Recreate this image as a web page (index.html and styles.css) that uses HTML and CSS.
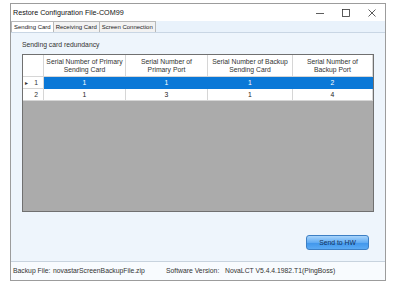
FILE: index.html
```html
<!DOCTYPE html>
<html>
<head>
    <title>Restore Configuration File-COM99</title>
    <link rel="stylesheet" href="styles.css">
</head>
<body>
    <div class="window">
        <div class="titlebar">
            <span class="title">Restore Configuration File-COM99</span>
            <div class="controls">
                <span class="ctl">
                    <svg width="8" height="8" viewBox="0 0 8 8"><line x1="0" y1="4.5" x2="8" y2="4.5" stroke="#333" stroke-width="0.8"/></svg>
                </span>
                <span class="ctl">
                    <svg width="8" height="8" viewBox="0 0 8 8"><rect x="0.5" y="0.5" width="7" height="7" fill="none" stroke="#333" stroke-width="0.8"/></svg>
                </span>
                <span class="ctl">
                    <svg width="8" height="8" viewBox="0 0 8 8"><path d="M0.5 0.5 L7.5 7.5 M7.5 0.5 L0.5 7.5" stroke="#333" stroke-width="0.8"/></svg>
                </span>
            </div>
        </div>

        <div class="tabs">
            <span class="tab active">Sending Card</span>
            <span class="tab">Receiving Card</span>
            <span class="tab">Screen Connection</span>
        </div>

        <div class="page">
            <div class="group-label">Sending card redundancy</div>

            <div class="grid">
                <div class="cell head corner"></div>
                <div class="cell head">Serial Number of Primary<br>Sending Card</div>
                <div class="cell head">Serial Number of<br>Primary Port</div>
                <div class="cell head">Serial Number of Backup<br>Sending Card</div>
                <div class="cell head">Serial Number of<br>Backup Port</div>

                <div class="cell rowhead"><span class="arrow">&#9656;</span>1</div>
                <div class="cell sel">1</div>
                <div class="cell sel">1</div>
                <div class="cell sel">1</div>
                <div class="cell sel">2</div>

                <div class="cell rowhead">2</div>
                <div class="cell">1</div>
                <div class="cell">3</div>
                <div class="cell">1</div>
                <div class="cell">4</div>

                <div class="empty"></div>
            </div>

            <div class="actions">
                <button class="send-button">Send to HW</button>
            </div>
        </div>

        <div class="status">
            <div class="status-line">
                <span class="lbl">Backup File:</span>
                <span class="val">novastarScreenBackupFile.zip</span>
                <span class="lbl2">Software Version:</span>
                <span>NovaLCT V5.4.4.1982.T1(PingBoss)</span>
            </div>
        </div>
    </div>
</body>
</html>
```

FILE: styles.css
```css
body {
    margin: 0;
    width: 394px;
    height: 285px;
    overflow: hidden;
    background: #fff;
    font-family: "Liberation Sans", Arial, sans-serif;
    font-size: 6.8px;
    color: #222;
}
.window {
    margin: 3px 0 0 10px;
    width: 374px;
    height: 276px;
    border: 1px solid #9c9c9c;
    display: flex;
    flex-direction: column;
    overflow: hidden;
    background: #fff;
}
.titlebar {
    height: 17px;
    display: flex;
    align-items: center;
    justify-content: space-between;
    padding-left: 2px;
}
.title { font-size: 7.2px; color: #111; }
.controls { display: flex; }
.ctl {
    width: 26px;
    height: 17px;
    display: flex;
    align-items: center;
    justify-content: center;
}
.tabs {
    height: 12px;
    background: #e9f2fb;
    display: flex;
    align-items: flex-end;
    border-bottom: 1px solid #c9d6e4;
    box-sizing: border-box;
}
.tab {
    font-size: 6px;
    height: 10px;
    line-height: 10px;
    padding: 0 2px;
    border: 1px solid #b9b9b9;
    border-bottom: none;
    background: #f2f2f2;
    margin-right: -1px;
    color: #222;
}
.tab.active { background: #fff; }
.page {
    flex: 1;
    background: #eef5fc;
    padding: 0 11px;
    display: flex;
    flex-direction: column;
    border-bottom: 1px solid #c8d3de;
}
.group-label {
    margin-top: 8px;
    height: 8px;
    line-height: 8px;
    color: #333;
}
.grid {
    margin-top: 5px;
    width: 350px;
    height: 156px;
    border: 1px solid #707070;
    display: grid;
    grid-template-columns: 21px 82px 82px 85px 80px;
    grid-template-rows: 22px 12px 12px 1fr;
    background: #ababab;
}
.cell {
    background: #fff;
    border-right: 1px solid #d6d6d6;
    border-bottom: 1px solid #d6d6d6;
    display: flex;
    align-items: center;
    justify-content: center;
    text-align: center;
    color: #222;
}
.head { line-height: 7.6px; color: #333; }
.rowhead {
    justify-content: flex-end;
    padding-right: 5px;
    color: #333;
}
.arrow { font-size: 6px; margin-right: 6px; color: #333; }
.sel {
    background: #0a78d7;
    color: #fff;
    border-right-color: #0a78d7;
    border-bottom-color: #0a78d7;
}
.empty { grid-column: 1 / 6; }
.actions {
    display: flex;
    justify-content: flex-end;
    margin-top: 23px;
    padding-right: 5px;
}
.send-button {
    width: 63px;
    height: 15px;
    padding: 0;
    border: 1px solid #3d7fc4;
    border-radius: 3px;
    background: linear-gradient(#a8d4fb, #62acf3 50%, #3f95eb 51%, #5aaaf4);
    font-family: "Liberation Sans", Arial, sans-serif;
    font-size: 6.8px;
    color: #10305a;
    cursor: pointer;
}
.status {
    height: 18px;
    background: #f8fbfe;
    padding: 5px 0 0 2px;
    box-sizing: border-box;
    overflow: hidden;
}
.status-line {
    display: flex;
    height: 9px;
    line-height: 8px;
    color: #333;
}
.lbl { width: 40px; }
.val { width: 113px; }
.lbl2 { width: 59px; }
```
